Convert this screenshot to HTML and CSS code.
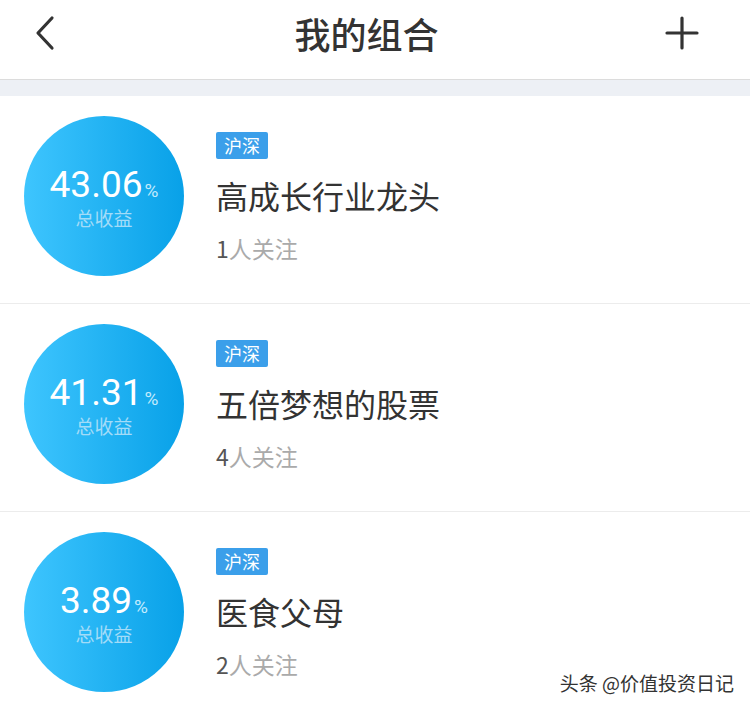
FILE: index.html
```html
<!DOCTYPE html>
<html lang="zh-CN">

<head>
    <meta charset="UTF-8">
    <meta name="viewport" content="width=device-width, initial-scale=1.0">
    <title>我的组合</title>
    <link rel="stylesheet" href="styles.css">
</head>

<body>
    <header class="topbar">
        <span class="back">
            <svg width="24" height="36" viewBox="0 0 24 36">
                <path d="M19 3 L5 18 L19 33" fill="none" stroke="#333" stroke-width="3.2" stroke-linecap="round" stroke-linejoin="round" />
            </svg>
        </span>
        <h1 class="title">我的组合</h1>
        <span class="add">
            <svg width="36" height="36" viewBox="0 0 36 36">
                <path d="M18 3 V33 M3 18 H33" fill="none" stroke="#333" stroke-width="3.2" stroke-linecap="round" />
            </svg>
        </span>
    </header>
    <div class="band"></div>

    <ul class="list">
        <li class="item">
            <div class="circle">
                <div class="rate">43.06<span class="pct">%</span></div>
                <div class="rate-label">总收益</div>
            </div>
            <div class="info">
                <span class="tag">沪深</span>
                <div class="name">高成长行业龙头</div>
                <div class="follow"><span class="num">1</span>人关注</div>
            </div>
        </li>
        <li class="item">
            <div class="circle">
                <div class="rate">41.31<span class="pct">%</span></div>
                <div class="rate-label">总收益</div>
            </div>
            <div class="info">
                <span class="tag">沪深</span>
                <div class="name">五倍梦想的股票</div>
                <div class="follow"><span class="num">4</span>人关注</div>
            </div>
        </li>
        <li class="item">
            <div class="circle">
                <div class="rate">3.89<span class="pct">%</span></div>
                <div class="rate-label">总收益</div>
            </div>
            <div class="info">
                <span class="tag">沪深</span>
                <div class="name">医食父母</div>
                <div class="follow"><span class="num">2</span>人关注</div>
            </div>
        </li>
    </ul>

    <div class="watermark">头条 @价值投资日记</div>
</body>

</html>
```

FILE: styles.css
```css
body {
    margin: 0;
    width: 750px;
    height: 710px;
    overflow: hidden;
    background: #fff;
    font-family: "Noto Sans CJK SC", "Noto Sans", sans-serif;
    color: #333;
    position: relative;
}

.topbar {
    height: 65px;
    border-bottom: 1px solid #dcdcdc;
    display: flex;
    align-items: center;
    justify-content: space-between;
    padding: 0 50px 14px 33px;
}

.back,
.add {
    display: flex;
    width: 36px;
}

.add {
    justify-content: flex-end;
}

.title {
    margin: 0;
    font-size: 36px;
    font-weight: 500;
    line-height: 44px;
    color: #333;
}

.band {
    height: 16px;
    background: #edf0f5;
}

.list {
    list-style: none;
    margin: 0;
    padding: 0;
}

.item {
    display: flex;
    gap: 32px;
    padding: 20px 0 27px 24px;
    border-bottom: 1px solid #ececec;
}

.circle {
    width: 160px;
    height: 153px;
    padding-top: 7px;
    border-radius: 50%;
    background: linear-gradient(90deg, #3ec5fe, #08a1e8);
    display: flex;
    flex-direction: column;
    align-items: center;
    justify-content: center;
    color: #fff;
}

.rate {
    font-family: Roboto, "Noto Sans", sans-serif;
    font-size: 37px;
    font-weight: 400;
    line-height: 30px;
}

.pct {
    font-size: 19px;
    color: #c4ebfd;
    margin-left: 2px;
}

.rate-label {
    font-size: 19px;
    line-height: 24px;
    color: #a3dcf8;
}

.info {
    display: flex;
    flex-direction: column;
    align-items: flex-start;
    padding-top: 16px;
}

.tag {
    background: #3b9fea;
    color: #fff;
    font-size: 18px;
    line-height: 27px;
    height: 27px;
    padding: 0 8px;
    border-radius: 2px;
}

.name {
    margin-top: 14px;
    font-size: 32px;
    line-height: 44px;
    color: #333;
}

.follow {
    margin-top: 15px;
    font-size: 23px;
    line-height: 32px;
    color: #aaa;
}

.num {
    color: #555;
}

.watermark {
    position: absolute;
    right: 16px;
    bottom: 14px;
    font-size: 19px;
    color: #333;
    text-shadow: 0 0 2px #fff, 1px 1px 1px #fff;
}
```
